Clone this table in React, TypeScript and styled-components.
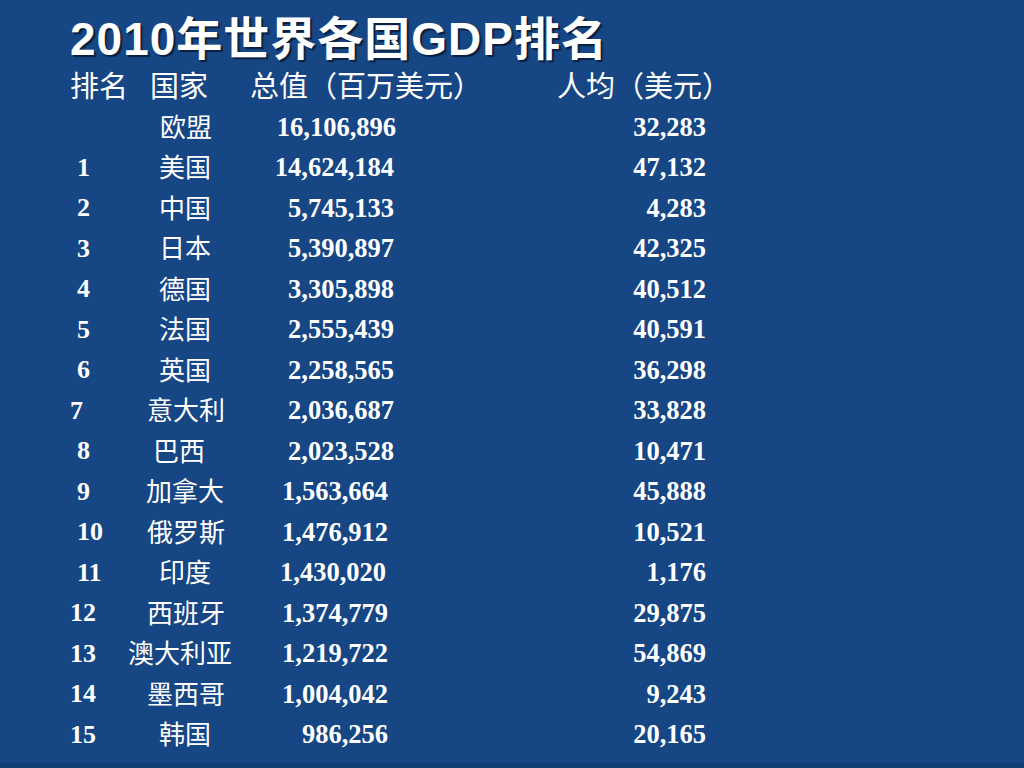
import React from "react";
import styled, { createGlobalStyle } from "styled-components";

const GlobalStyle = createGlobalStyle`
  html, body {
    margin: 0;
    padding: 0;
    background: #164683;
  }
`;

const Slide = styled.div`
  box-sizing: border-box;
  width: 1024px;
  height: 768px;
  padding: 14px 0 0 70px;
  background: #164683;
  border-bottom: 6px solid #133e74;
  color: #ffffff;
  overflow: hidden;
`;

const Title = styled.h1`
  margin: 0;
  font-family: "Liberation Sans", "Noto Sans CJK SC", sans-serif;
  font-weight: bold;
  font-size: 46px;
  line-height: 50px;
  letter-spacing: 1px;
  text-shadow: 2px 2px 1px #0a1f3e;
`;

const Header = styled.div`
  display: flex;
  margin-top: 5px;
  height: 30px;
  align-items: center;
  font-family: "Noto Sans CJK SC", sans-serif;
  font-size: 29px;
`;

const HeaderCell = styled.span<{ $w?: number }>`
  flex: none;
  width: ${(p) => (p.$w ? `${p.$w}px` : "auto")};
  white-space: nowrap;
`;

const Table = styled.div`
  margin-top: 8px;
  display: flex;
  flex-direction: column;
`;

const Row = styled.div`
  display: grid;
  grid-template-columns: 62px 108px 156px 310px;
  height: 40.5px;
  align-items: center;
`;

const Rank = styled.span<{ $indent: number }>`
  padding-left: ${(p) => p.$indent}px;
  font-family: "Liberation Serif", serif;
  font-weight: bold;
  font-size: 26px;
`;

const Name = styled.span<{ $shift: number }>`
  display: flex;
  justify-content: center;
  transform: translate(${(p) => -p.$shift}px, -2px);
  font-family: "Noto Sans CJK SC", sans-serif;
  font-size: 26px;
  white-space: nowrap;
`;

const Num = styled.span<{ $pad?: number }>`
  text-align: right;
  padding-right: ${(p) => p.$pad ?? 0}px;
  font-family: "Liberation Serif", serif;
  font-weight: bold;
  font-size: 26.5px;
`;

type Country = {
  rank: string;
  indent: number;
  name: string;
  shift?: number;
  total: string;
  totalPad: number;
  perCapita: string;
};

const rows: Country[] = [
  { rank: "", indent: 0, name: "欧盟", total: "16,106,896", totalPad: 0, perCapita: "32,283" },
  { rank: "1", indent: 7, name: "美国", shift: 1, total: "14,624,184", totalPad: 2, perCapita: "47,132" },
  { rank: "2", indent: 7, name: "中国", shift: 1, total: "5,745,133", totalPad: 2, perCapita: "4,283" },
  { rank: "3", indent: 7, name: "日本", shift: 1, total: "5,390,897", totalPad: 2, perCapita: "42,325" },
  { rank: "4", indent: 7, name: "德国", shift: 1, total: "3,305,898", totalPad: 2, perCapita: "40,512" },
  { rank: "5", indent: 7, name: "法国", shift: 1, total: "2,555,439", totalPad: 2, perCapita: "40,591" },
  { rank: "6", indent: 7, name: "英国", shift: 1, total: "2,258,565", totalPad: 2, perCapita: "36,298" },
  { rank: "7", indent: 0, name: "意大利", total: "2,036,687", totalPad: 2, perCapita: "33,828" },
  { rank: "8", indent: 7, name: "巴西", shift: 7, total: "2,023,528", totalPad: 2, perCapita: "10,471" },
  { rank: "9", indent: 7, name: "加拿大", shift: 1, total: "1,563,664", totalPad: 8, perCapita: "45,888" },
  { rank: "10", indent: 7, name: "俄罗斯", total: "1,476,912", totalPad: 8, perCapita: "10,521" },
  { rank: "11", indent: 7, name: "印度", shift: 1, total: "1,430,020", totalPad: 10, perCapita: "1,176" },
  { rank: "12", indent: 0, name: "西班牙", total: "1,374,779", totalPad: 8, perCapita: "29,875" },
  { rank: "13", indent: 0, name: "澳大利亚", shift: 6, total: "1,219,722", totalPad: 8, perCapita: "54,869" },
  { rank: "14", indent: 0, name: "墨西哥", total: "1,004,042", totalPad: 8, perCapita: "9,243" },
  { rank: "15", indent: 0, name: "韩国", shift: 1, total: "986,256", totalPad: 8, perCapita: "20,165" },
];

export default function App() {
  return (
    <>
      <GlobalStyle />
      <Slide>
        <Title>2010年世界各国GDP排名</Title>
        <Header>
          <HeaderCell $w={80}>排名</HeaderCell>
          <HeaderCell $w={100}>国家</HeaderCell>
          <HeaderCell $w={307}>总值（百万美元）</HeaderCell>
          <HeaderCell>人均（美元）</HeaderCell>
        </Header>
        <Table>
          {rows.map((r) => (
            <Row key={r.name}>
              <Rank $indent={r.indent}>{r.rank}</Rank>
              <Name $shift={r.shift ?? 0}>{r.name}</Name>
              <Num $pad={r.totalPad}>{r.total}</Num>
              <Num>{r.perCapita}</Num>
            </Row>
          ))}
        </Table>
      </Slide>
    </>
  );
}
